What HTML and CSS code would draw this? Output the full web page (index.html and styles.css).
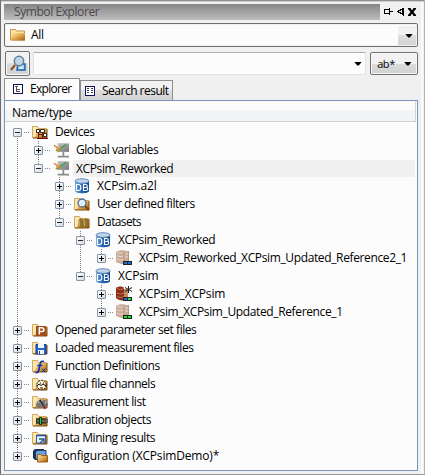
FILE: index.html
```html
<!DOCTYPE html>
<html lang="en">
<head>
<meta charset="utf-8">
<title>Symbol Explorer</title>
<link rel="stylesheet" href="styles.css">
</head>
<body>
<svg class="defs" width="0" height="0">
  <defs>
    <linearGradient id="gold" x1="0" y1="0" x2="1" y2="1"><stop offset="0" stop-color="#ffe9a8"/><stop offset=".5" stop-color="#e0a850"/><stop offset="1" stop-color="#9c5c0c"/></linearGradient>
    <linearGradient id="blue" x1="0" y1="0" x2="1" y2="0"><stop offset="0" stop-color="#7fa9d6"/><stop offset=".4" stop-color="#2a6dbb"/><stop offset="1" stop-color="#0d4790"/></linearGradient>
    <linearGradient id="grey" x1="0" y1="0" x2="1" y2="1"><stop offset="0" stop-color="#bdbdbd"/><stop offset="1" stop-color="#777"/></linearGradient>
    <symbol id="folder" viewBox="0 0 16 16"><path d="M.5 13.500V2.500h5l1 2h8v9z" fill="#f9e7b4" stroke="#d2a85c"/><path d="M3 13.500 5 5h10v9H3z" fill="url(#gold)"/><path d="M1 14h14V5" fill="none" stroke="#7d4f12"/></symbol>
    <symbol id="allfolder" viewBox="0 0 16 16"><path d="M.5 13V2.500h5l1 1.500h8v9z" fill="#fbe3a3" stroke="#c79343"/><path d="M1 13 2.500 6H15v7.500H1z" fill="url(#gold)"/></symbol>
    <symbol id="devices" viewBox="0 0 16 16"><use href="#folder"/><path d="M6.500 8v5.500M10.500 9v5" stroke="#5a1a10" fill="none"/><path d="M8.500 5.500h4v3h-4z" fill="#fff" stroke="#3a2a1c"/><path d="M4.500 5.500h3v3h-3zM11.500 9.500h3v3h-3z" fill="#fff" stroke="#3a2a1c"/><path d="M5 14.500h11M6 10.500h5" stroke="#7d0907"/></symbol>
    <symbol id="monitor" viewBox="0 0 17 16"><path d="M5 1h12v9H5z" fill="url(#grey)"/><path d="M5.500 10V1.500H16" fill="none" stroke="#c2c2c2"/><path d="M11 10v5M5 15h12" stroke="#8c8c8c" stroke-width="1.800"/><path d="M3 8l2 1 9-7" fill="none" stroke="#35a33c" stroke-width="1.300"/><path d="M1 3l3 2 1 4 3-4" fill="none" stroke="#dd8a30" stroke-width="1.600"/></symbol>
    <symbol id="db" viewBox="0 0 16 16"><path d="M1 3v10c0 3 14 3 14 0V3z" fill="url(#blue)"/><ellipse cx="8" cy="3" rx="7" ry="2.300" fill="#c1d3e5" stroke="#5f8fc3"/><path d="M2.500 6.500v6h2c3.200 0 3.200-6 0-6zM9.500 6.500v6h2.500c2.500 0 2.500-3 0-3H9.500h2c2.500 0 2.500-3 0-3z" fill="none" stroke="#fff" stroke-width="1.100"/></symbol>
    <symbol id="search" viewBox="0 0 16 16"><use href="#folder"/><circle cx="8" cy="7" r="4" fill="#dcedff" stroke="#526a8b" stroke-width="1.300"/><path d="m11 10 4 4" stroke="#81470f" stroke-width="2.200"/></symbol>
    <symbol id="datasets" viewBox="0 0 16 16"><use href="#folder"/><path d="M5 6c0-1.500 4-1.500 4 0v7H5zM10 6c0-1.500 4-1.500 4 0v7h-4z" fill="#96742e" stroke="#77571f" stroke-width=".6"/><path d="M5.500 6.500v6M10.500 6.500v6" stroke="#c5a560"/></symbol>
    <symbol id="stack" viewBox="0 0 16 16"><path d="M0 2c1-2 9-2 10-1h3v13H5l-5-2z" fill="#c9ad98"/><path d="M1 2c3 2 6 1 7 0M1 5.500c3 2 6 1 7 0M1 9c3 2 6 1 7 0M9 4h4M9 7h4" fill="none" stroke="#e9dccf"/><path d="M8 2v12M12.500 1v10" stroke="#b89684"/></symbol>
    <symbol id="set-blue" viewBox="0 0 16 16"><use href="#stack"/><path d="M7 11h9v4H7z" fill="#222"/><path d="M8 12h3v2H8zM12 12h3v2h-3z" fill="#176fd3"/></symbol>
    <symbol id="set-green" viewBox="0 0 16 16"><use href="#stack"/><path d="M7 11h9v4H7z" fill="#162616"/><path d="M8 12h3v2H8zM12 12h3v2h-3z" fill="#20df3c"/></symbol>
    <symbol id="set-active" viewBox="0 0 16 16"><path d="M0 2c2-2 7-2 8 0v12c-2 1-6 0-8-2z" fill="#8e2c18"/><path d="M1 2.500c2 1.200 5 1.200 7 0M1 7c3 1.500 5 1 7 0M1 10.500c3 1.500 5 1 7 0" fill="none" stroke="#c98a6c" stroke-width=".8"/><path d="M8 3h4v9H8z" fill="#c38d64"/><path d="M12.500 0v7M9 1.500l7 4M16 1.500l-7 4" stroke="#222"/><path d="M7 11h9v4H7z" fill="#222"/><path d="M8 12h3v2H8z" fill="#176fd3"/><path d="M12 12h3v2h-3z" fill="#20df3c"/></symbol>
    <symbol id="param" viewBox="0 0 16 16"><use href="#folder"/><path d="M4 4h10v10H4z" fill="#a34a16"/><path d="M7.300 12.500V5.800h2.200c3.200 0 3.200 3.800 0 3.800H7.300" fill="none" stroke="#fff" stroke-width="1.500"/></symbol>
    <symbol id="disk" viewBox="0 0 16 16"><use href="#folder"/><path d="M4 4.500h10V14H4z" fill="#2464cd" stroke="#113b94"/><path d="M6 4h6v4H6zM6 10h6v4H6z" fill="#f0f7ff"/><path d="M7 11h1v3H7z" fill="#194796"/></symbol>
    <symbol id="function" viewBox="0 0 16 16"><use href="#folder"/><path d="M12 3.500c-3-1-3.500 0-4.500 5.500s-1.500 6-4 5.500M5.500 7.500h5" fill="none" stroke="#1030b8" stroke-width="1.600"/><path d="m10 10.500 3 3.500M13.500 10.500 10 14" stroke="#1030b8"/></symbol>
    <symbol id="virtual" viewBox="0 0 16 16"><use href="#folder"/><circle cx="9.500" cy="9" r="4.700" fill="#fff3d4" stroke="#111" stroke-dasharray="2 1"/><path d="M5 10l2-2 2 1.500 2-1.500 3 2M8 12h3M8.500 6.500v1M11.500 6.500v1" fill="none" stroke="#111"/></symbol>
    <symbol id="measure" viewBox="0 0 16 16"><use href="#folder"/><path d="M4 12c0-9 12-9 12 0l-3 2H7z" fill="#777"/><path d="M5.500 7.500l1.500 1.500M10 5v2M14.500 7.500 13 9" stroke="#ddd"/><path d="m8 6 5 8" stroke="#222" stroke-width="1.300"/><path d="m11 11 2 4" stroke="#c01818" stroke-width="1.500"/></symbol>
    <symbol id="calibrate" viewBox="0 0 16 16"><use href="#folder"/><path d="M4 6h10v6H4z" fill="#64502f"/><path d="M4 9h13" stroke="#222" stroke-width="3"/><path d="M5 9h11" stroke="#aaa"/><path d="M7.500 5.500h2v7h-2z" fill="#24d443" stroke="#073b0b"/></symbol>
    <symbol id="mining" viewBox="0 0 16 16"><use href="#folder"/><path d="M4.500 5.500h9V13h-9z" fill="#e9f4ff" stroke="#31639c"/><path d="M4 5.500h10" stroke="#1751a0" stroke-width="1.500"/><path d="M7 9h5v4M8 13l4-4" fill="none" stroke="#33568c" stroke-width="1.300"/></symbol>
    <symbol id="config" viewBox="0 0 16 16"><path d="M1 3l2-2h9v11H3l-2-2z" fill="#16304f"/><path d="M3.500 4l1.500-1.500h9V11H3.500z" fill="#6ba2d9" stroke="#173f70"/><path d="M5.500 14V6.500h3l1 1h6V14z" fill="url(#gold)" stroke="#9f5a17"/></symbol>
  </defs>
</svg>
<main class="window">
  <header class="titlebar">
    <h1 class="title">Symbol Explorer</h1>
    <svg class="controls" width="37" height="16" viewBox="0 0 37 16"><path d="M4 5h6v1H4zM4 6h1v3H4zM4 9h6v1H4zM9 4h1v7H9zM10 7h3v1h-3z"/><path d="M22 4h2v8h-1v-1h-1v-1h-2V9h-2V8h-1V7h1V6h2V5h2zM22 6h-1v1h-2v1h2v1h1z" fill-rule="evenodd"/><path d="M28 4h2.500L32 6.500 33.500 4H36v1l-2.500 3L36 11v1h-2.500L32 9.500 30.500 12H28v-1l2.500-3L28 5z"/></svg>
  </header>
  <div class="scope">
    <svg class="scope-icon" width="16" height="16"><use href="#allfolder"/></svg>
    <span class="scope-label">All</span>
    <span class="drop"><i class="arrow"></i></span>
  </div>
  <div class="filter">
    <button class="find" aria-label="Find"><svg width="18" height="18" viewBox="0 0 18 18"><path d="M9 9h7v6H8z" fill="#b4d6f6" stroke="#1c60b2" stroke-width="1.500"/><path d="M10 13h4" stroke="#fff"/><circle cx="10" cy="6" r="4.700" fill="#c3d6e6" stroke="#637e9c" stroke-width="1.500"/><path d="m6 10-4 5" stroke="#8c5525" stroke-width="2.200"/></svg></button>
    <div class="query"><i class="arrow"></i></div>
    <button class="mode"><span>ab*</span><i class="arrow"></i></button>
  </div>
  <nav class="tabs">
    <div class="tab active"><svg width="10" height="10" viewBox="0 0 10 10" shape-rendering="crispEdges"><path d="M.5.5h9v9h-9z" fill="#fff" stroke="#11115c"/><path d="M2 2.500h3M3.500 3v5M4 5.500h3M4 7.500h3" stroke="#555"/></svg><span>Explorer</span></div>
    <div class="tab"><svg width="10" height="10" viewBox="0 0 10 10" shape-rendering="crispEdges"><path d="M.5.5h9v9h-9z" fill="#fff" stroke="#11115c"/><path d="M2 2.500h2M2 4.500h2M2 6.500h2M6 2.500h2M6 4.500h2M6 6.500h2" stroke="#345"/></svg><span>Search result</span></div>
  </nav>
  <section class="panel">
    <div class="column-head">Name/type</div>
    <ul class="tree">
      <li><div class="row"><i class="box open"></i><i class="link"></i><svg><use href="#devices"/></svg><span>Devices</span></div>
        <ul>
          <li><div class="row"><i class="box"></i><i class="link"></i><svg><use href="#monitor"/></svg><span>Global variables</span></div></li>
          <li><div class="row"><i class="box open"></i><i class="link"></i><svg><use href="#monitor"/></svg><span class="name selected">XCPsim_Reworked</span></div>
            <ul>
              <li><div class="row"><i class="box"></i><i class="link"></i><svg><use href="#db"/></svg><span class="short">XCPsim.a2l</span></div></li>
              <li><div class="row"><i class="box"></i><i class="link"></i><svg><use href="#search"/></svg><span>User defined filters</span></div></li>
              <li><div class="row"><i class="box open"></i><i class="link"></i><svg><use href="#datasets"/></svg><span class="tight">Datasets</span></div>
                <ul>
                  <li><div class="row"><i class="box open"></i><i class="link"></i><svg><use href="#db"/></svg><span class="name">XCPsim_Reworked</span></div>
                    <ul><li><div class="row"><i class="box"></i><i class="link"></i><svg><use href="#set-blue"/></svg><span class="name">XCPsim_Reworked_XCPsim_Updated_Reference2_1</span></div></li></ul>
                  </li>
                  <li><div class="row"><i class="box open"></i><i class="link"></i><svg><use href="#db"/></svg><span class="short">XCPsim</span></div>
                    <ul>
                      <li><div class="row"><i class="box"></i><i class="link"></i><svg><use href="#set-active"/></svg><span class="short">XCPsim_XCPsim</span></div></li>
                      <li><div class="row"><i class="box"></i><i class="link"></i><svg><use href="#set-green"/></svg><span class="name">XCPsim_XCPsim_Updated_Reference_1</span></div></li>
                    </ul>
                  </li>
                </ul>
              </li>
            </ul>
          </li>
        </ul>
      </li>
      <li><div class="row"><i class="box"></i><i class="link"></i><svg><use href="#param"/></svg><span>Opened parameter set files</span></div></li>
      <li><div class="row"><i class="box"></i><i class="link"></i><svg><use href="#disk"/></svg><span>Loaded measurement files</span></div></li>
      <li><div class="row"><i class="box"></i><i class="link"></i><svg><use href="#function"/></svg><span class="name">Function Definitions</span></div></li>
      <li><div class="row"><i class="box"></i><i class="link"></i><svg><use href="#virtual"/></svg><span>Virtual file channels</span></div></li>
      <li><div class="row"><i class="box"></i><i class="link"></i><svg><use href="#measure"/></svg><span>Measurement list</span></div></li>
      <li><div class="row"><i class="box"></i><i class="link"></i><svg><use href="#calibrate"/></svg><span>Calibration objects</span></div></li>
      <li><div class="row"><i class="box"></i><i class="link"></i><svg><use href="#mining"/></svg><span>Data Mining results</span></div></li>
      <li><div class="row"><i class="box"></i><i class="link"></i><svg><use href="#config"/></svg><span class="short">Configuration (XCPsimDemo)*</span></div></li>
    </ul>
  </section>
</main>
</body>
</html>
```
FILE: styles.css
```css
* { box-sizing: border-box; }
body { margin: 0; background: #f0f0f0; overflow: hidden; }
body, button { font: 12px/18px "Open Sans", "Noto Sans", sans-serif; color: #000; letter-spacing: -.25px; }
.defs { display: block; }
.window {
  display: flex; flex-direction: column;
  width: 425px; height: 475px; padding: 3px 6px 1px 3px;
  border: 1px solid #8f8d92; border-left-color: #6f6a70; border-right-color: #b4b4b4; border-bottom-color: #999;
  box-shadow: inset 0 1px #d0d0d0, inset -1px 0 #f0f0f0, inset -3px 0 #fafafa;
}
.titlebar { display: flex; height: 16px; flex: none; }
.title { width: 376px; margin: 0; padding-left: 10px; font-size: 12px; font-weight: 400; line-height: 16px; color: #4c484d; background: linear-gradient(#858585, #bebebe); letter-spacing: -.42px; }
.scope { display: flex; align-items: center; flex: none; width: 414px; height: 24px; margin-top: 3px; padding: 2px 1px 2px 5px; border: 1px solid #707070; border-radius: 2px; background: #fcfcfc; box-shadow: inset 0 0 0 1px #f1f1f1; }
.scope-icon { width: 16px; height: 16px; }
.scope-label { flex: 1; padding-left: 5px; }
.drop { display: flex; align-items: center; justify-content: center; width: 18px; height: 19px; padding: 1px 0 0 4px; background: linear-gradient(#f1f1f1 50%, #dcdede 50%, #d3d5d5); }
.arrow { width: 8px; height: 4px; background: #000; clip-path: polygon(0 0, 100% 0, 60% 100%, 40% 100%); }
.filter { display: flex; flex: none; height: 25px; margin-top: 4px; padding-left: 1px; }
.find, .mode { display: flex; align-items: center; justify-content: center; padding: 0; border: 1px solid #707070; border-radius: 2px; background: linear-gradient(#f2f2f2 50%, #dddddd 50%, #d1d1d1); box-shadow: inset 0 0 0 1px #f7f7f7; }
.find { width: 25px; height: 25px; }
.query { display: flex; align-items: center; justify-content: flex-end; width: 333px; height: 23px; margin: 1px 4px 0 3px; padding-right: 3px; border: 1px solid #e2e3e6; border-top-color: #abadb3; background: #fcfcfc; }
.mode { width: 48px; height: 23px; margin-top: 1px; gap: 9px; padding-left: 1px; font-size: 11px; letter-spacing: -.4px; }
.mode span { padding-top: 1px; }
.tabs { display: flex; align-items: flex-end; flex: none; height: 22px; margin-top: 2px; }
.tab { display: flex; align-items: center; height: 20px; width: 93px; padding-left: 4px; gap: 7px; border: 1px solid #8c8e94; border-bottom: 0; background: linear-gradient(#f2f2f2 50%, #dedede 50%, #d2d2d2); white-space: nowrap; letter-spacing: -.5px; }
.tab.active { width: 76px; height: 22px; padding: 0 0 2px 8px; background: #fcfcfc; letter-spacing: -.7px; }
.panel { flex: none; width: 414px; height: 371px; border: 1px solid #7696bd; background: #fcfcfc; }
.column-head { width: 411px; height: 21px; padding: 3px 0 0 7px; line-height: 18px; border-right: 1px solid #d5d5d5; border-bottom: 1px solid #d0d0d0; background: linear-gradient(#fcfcfc 45%, #f3f4f5 46%); }
.tree, .tree ul { list-style: none; margin: 0; padding: 0; }
.tree { padding: 1px 0 0 8px; letter-spacing: -.44px; }
.tree .name { letter-spacing: -.37px; }
.tree .short { letter-spacing: -.17px; }
.tree .tight { letter-spacing: -.62px; }
.tree ul { padding-left: 21px; }
.tree li { background: repeating-linear-gradient(#808080 0 1px, transparent 1px 2px) 4px 0 / 1px 100% no-repeat; }
.tree li:last-child { background-size: 1px 9px; }
.tree > li:first-child { background-position: 4px 9px; }
.row { display: flex; align-items: center; height: 18px; white-space: nowrap; }
.row svg { width: 16px; height: 16px; flex: none; overflow: visible; }
.row span { margin-left: 4px; padding-left: 3px; }
.row .selected { flex: 1; height: 17px; line-height: 17px; margin-left: 4px; margin-right: 2px; background: #f0f0f0; }
.box { width: 9px; height: 9px; flex: none; border: 1px solid #8295ac; border-radius: 1px; background: linear-gradient(#000, #000) 1px 3px / 5px 1px no-repeat, linear-gradient(#000, #000) 3px 1px / 1px 5px no-repeat, linear-gradient(135deg, #fff, #d9d9d9); }
.box.open { background: linear-gradient(#223, #223) 1px 3px / 5px 1px no-repeat, linear-gradient(135deg, #fff, #d9d9d9); }
.link { width: 7px; height: 1px; margin: 0 2px 0 1px; flex: none; background: repeating-linear-gradient(90deg, transparent 0 1px, #888 1px 2px); }
```
